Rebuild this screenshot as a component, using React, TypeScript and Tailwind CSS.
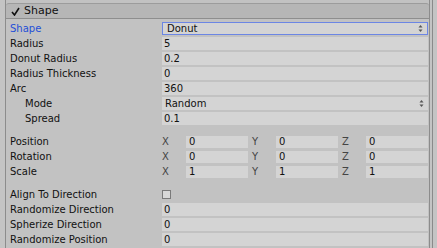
import React from 'react';

const FONT = "font-['DejaVu_Sans',sans-serif]";

function Arrows() {
  return (
    <svg width="5" height="9" viewBox="0 0 5 9" className="shrink-0">
      <path d="M2.5 1 L4.5 3.5 L0.5 3.5 Z" fill="#555" />
      <path d="M2.5 8 L4.5 5.5 L0.5 5.5 Z" fill="#555" />
    </svg>
  );
}

function Label({ text, indent, active }: { text: string; indent?: boolean; active?: boolean }) {
  return (
    <div
      className={`w-[156px] shrink-0 whitespace-nowrap ${indent ? 'pl-[19px]' : 'pl-[4px]'} ${
        active ? 'text-[#1f4fd8]' : 'text-[#111]'
      }`}
    >
      {text}
    </div>
  );
}

function Field({ value }: { value: string }) {
  return (
    <div className="flex h-[13px] w-[266px] items-center bg-[#d4d4d4] pl-[2px] leading-none">
      {value}
    </div>
  );
}

function Popup({ value, focused }: { value: string; focused?: boolean }) {
  return (
    <div
      className={`flex h-[13px] w-[266px] items-center justify-between bg-[#d4d4d4] pr-[4px] leading-none ${
        focused ? 'border border-[#6c86e4] pl-[4px]' : 'pl-[3px]'
      }`}
    >
      <span>{value}</span>
      <Arrows />
    </div>
  );
}

function Row({ children }: { children: React.ReactNode }) {
  return <div className="flex h-[15px] items-center">{children}</div>;
}

function VecRow({ label, x, y, z }: { label: string; x: string; y: string; z: string }) {
  const cells = [
    ['X', x],
    ['Y', y],
    ['Z', z],
  ];
  return (
    <Row>
      <Label text={label} />
      <div className="grid w-[266px] grid-cols-3 gap-[4px]">
        {cells.map(([axis, v]) => (
          <div key={axis} className="flex items-center">
            <span className="w-[24px] shrink-0 text-[#444]">{axis}</span>
            <div className="flex h-[12px] flex-1 items-center bg-[#d4d4d4] pl-[3px] leading-none">{v}</div>
          </div>
        ))}
      </div>
    </Row>
  );
}

export default function App() {
  return (
    <div className={`flex h-[248px] w-[437px] overflow-hidden bg-[#c4c4c4] text-[10px] text-[#111] ${FONT}`}>
      <div className="ml-[5px] flex w-[425px] flex-col border-x border-[#8c8c8c] bg-[#c2c2c2]">
        <div className="mt-[3px] flex h-[16px] items-center gap-[4px] rounded-t-[3px] border-y border-t-[#9c9c9c] border-b-[#8e8e8e] bg-[#b6b6b6] pl-[5px]">
          <svg width="9" height="9" viewBox="0 0 9 9">
            <path d="M1 5 L3.5 8 L8 1" fill="none" stroke="#111" strokeWidth="1.6" />
          </svg>
          <span className="text-[11px]">Shape</span>
        </div>

        <div className="mt-[2px] flex flex-col">
          <Row>
            <Label text="Shape" active />
            <Popup value="Donut" focused />
          </Row>
          <Row>
            <Label text="Radius" />
            <Field value="5" />
          </Row>
          <Row>
            <Label text="Donut Radius" />
            <Field value="0.2" />
          </Row>
          <Row>
            <Label text="Radius Thickness" />
            <Field value="0" />
          </Row>
          <Row>
            <Label text="Arc" />
            <Field value="360" />
          </Row>
          <Row>
            <Label text="Mode" indent />
            <Popup value="Random" />
          </Row>
          <Row>
            <Label text="Spread" indent />
            <Field value="0.1" />
          </Row>

          <div className="h-[8px]" />
          <VecRow label="Position" x="0" y="0" z="0" />
          <VecRow label="Rotation" x="0" y="0" z="0" />
          <VecRow label="Scale" x="1" y="1" z="1" />

          <div className="h-[8px]" />
          <Row>
            <Label text="Align To Direction" />
            <div className="h-[9px] w-[9px] border border-[#7a7a7a] bg-[#d8d8d8]" />
          </Row>
          <Row>
            <Label text="Randomize Direction" />
            <Field value="0" />
          </Row>
          <Row>
            <Label text="Spherize Direction" />
            <Field value="0" />
          </Row>
          <Row>
            <Label text="Randomize Position" />
            <Field value="0" />
          </Row>
        </div>
      </div>
      <div className="w-[2px]" />
      <div className="w-[1px] bg-[#8a8a8a]" />
    </div>
  );
}
